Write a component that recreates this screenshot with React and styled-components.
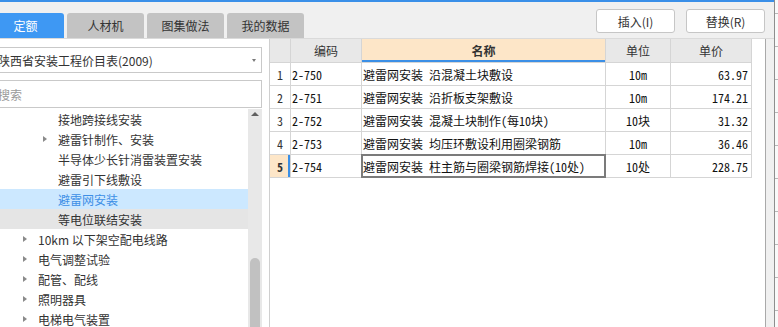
import React from 'react';
import styled, { createGlobalStyle } from 'styled-components';

const GlobalStyle = createGlobalStyle`
  html, body { margin: 0; padding: 0; background: #f9f9f9; overflow: hidden; }
  body { font-family: "Noto Sans CJK SC", "Noto Sans", sans-serif; font-size: 12px; color: #333; }
  * { box-sizing: border-box; }
`;

const Screen = styled.div`
  display: flex;
  width: 778px;
  height: 327px;
  overflow: hidden;
`;

const Window = styled.div`
  width: 775px;
  flex: none;
  display: flex;
  flex-direction: column;
  background: #f0f0f0;
  border-right: 1px solid #8e8e8e;
  overflow: hidden;
`;

const EdgeStrip = styled.div`
  flex: 1;
  background-color: #f9f9f9;
  background-image: repeating-linear-gradient(
    to bottom,
    transparent 0 13px,
    #b8b8b8 13px 14px,
    transparent 14px 33px
  );
`;

const TopStrip = styled.div`
  height: 2px;
  flex: none;
  background: #3a8fe8;
`;

const Header = styled.div`
  height: 36px;
  flex: none;
  display: flex;
  align-items: flex-start;
`;

const TabList = styled.div`
  display: flex;
  gap: 3px;
  margin-left: -13px;
  margin-top: 11px;
`;

const Tab = styled.div`
  width: 77px;
  height: 25px;
  border-radius: 3px 3px 0 0;
  background: ${p => (p.$active ? '#3e98f3' : '#c3c3c3')};
  color: ${p => (p.$active ? '#fff' : '#333')};
  display: flex;
  align-items: center;
  justify-content: center;
  font-size: 12px;
`;

const ButtonGroup = styled.div`
  margin-left: auto;
  margin-top: 7px;
  margin-right: 9px;
  display: flex;
  gap: 11px;
`;

const Button = styled.button`
  width: 79px;
  height: 24px;
  border: 1px solid #c6c6c6;
  border-radius: 3px;
  background: #fff;
  color: #333;
  font-family: "Noto Sans CJK SC", "Noto Sans", sans-serif;
  font-size: 12px;
  padding: 0;
  display: flex;
  align-items: center;
  justify-content: center;
`;

const Body = styled.div`
  flex: 1;
  min-height: 0;
  display: flex;
  border-top: 1px solid #dadada;
  padding-right: 8px;
`;

const LeftPanel = styled.div`
  margin-left: -13px;
  width: 283px;
  flex: none;
  background: #fff;
  border-right: 1px solid #cfcfcf;
  display: flex;
  flex-direction: column;
  padding: 8px 7px 0 8px;
`;

const Select = styled.div`
  height: 26px;
  flex: none;
  border: 1px solid #c9c9c9;
  display: flex;
  align-items: center;
  padding: 0 5px 0 2px;
  color: #333;
`;

const Caret = styled.span`
  margin-left: auto;
  width: 0;
  height: 0;
  border-top: 3px solid #7a7a7a;
  border-left: 2.5px solid transparent;
  border-right: 2.5px solid transparent;
`;

const Search = styled.div`
  height: 28px;
  flex: none;
  margin-top: 7px;
  border: 1px solid #c9c9c9;
  display: flex;
  align-items: center;
  padding: 0 2px;
  color: #9a9a9a;
`;

const Tree = styled.div`
  flex: 1;
  min-height: 0;
  margin-top: 1px;
  display: flex;
  overflow: hidden;
`;

const TreeList = styled.div`
  flex: 1;
  display: flex;
  flex-direction: column;
`;

const TreeRow = styled.div`
  height: 20px;
  flex: none;
  display: flex;
  align-items: center;
  padding-left: ${p => (p.$level === 2 ? 26 : 46)}px;
  background: ${p => (p.$state === 'selected' ? '#cce8ff' : p.$state === 'hover' ? '#e5e5e5' : 'transparent')};
  color: ${p => (p.$state === 'selected' ? '#3d8fe6' : '#333')};
  white-space: nowrap;
`;

const ArrowSlot = styled.span`
  width: 17px;
  flex: none;
  display: flex;
  align-items: center;
  padding-left: 2px;
`;

const Arrow = styled.span`
  width: 0;
  height: 0;
  border-left: 4px solid #8a8a8a;
  border-top: 3px solid transparent;
  border-bottom: 3px solid transparent;
`;

const ScrollBar = styled.div`
  width: 14px;
  flex: none;
  background: #e8e8e8;
  display: flex;
  flex-direction: column;
  align-items: center;
`;

const UpArrow = styled.span`
  margin-top: 3px;
  width: 0;
  height: 0;
  border-bottom: 4px solid #606060;
  border-left: 4px solid transparent;
  border-right: 4px solid transparent;
`;

const Thumb = styled.div`
  margin-top: 142px;
  width: 10px;
  height: 90px;
  flex: none;
  border-radius: 5px;
  background: #c1c1c1;
`;

const TablePanel = styled.div`
  flex: 1;
  min-width: 0;
  background: #fff;
  border-right: 1px solid #a9a9a9;
  overflow: hidden;
`;

const Grid = styled.div`
  display: grid;
  width: max-content;
  grid-template-columns: 20px 70px 243px 64px 80px;
  grid-template-rows: 23px repeat(5, 22px);
  gap: 1px;
  padding: 0 1px 1px 0;
  background: #d5d5d5;
`;

const HeadCell = styled.div`
  background: ${p => (p.$active ? '#fde6c8' : '#e8e8e8')};
  box-shadow: ${p => (p.$active ? 'inset 0 -2px 0 #3b8fe6' : 'none')};
  font-weight: ${p => (p.$active ? 700 : 400)};
  display: flex;
  align-items: center;
  justify-content: center;
  font-size: 12px;
  color: #333;
`;

const NumCell = styled.div`
  background: ${p => (p.$current ? '#fde6c8' : '#fff')};
  box-shadow: ${p => (p.$current ? 'inset -2px 0 0 #3b8fe6' : 'none')};
  font-weight: ${p => (p.$current ? 700 : 400)};
  font-family: "Noto Sans Mono CJK SC", "Liberation Mono", monospace;
  display: flex;
  align-items: center;
  justify-content: center;
  font-size: 12px;
`;

const justifyMap = { left: 'flex-start', center: 'center', right: 'flex-end' };

const Cell = styled.div`
  position: relative;
  background: #fff;
  display: flex;
  align-items: center;
  justify-content: ${p => justifyMap[p.$align || 'left']};
  padding: ${p => (p.$align === 'right' ? '0 3px 0 0' : p.$align === 'center' ? '0' : '0 0 0 1px')};
  font-family: "Noto Sans Mono CJK SC", "Noto Sans CJK SC", monospace;
  font-size: 12px;
  color: #111;
  white-space: nowrap;

  &::after {
    content: '';
    display: ${p => (p.$focused ? 'block' : 'none')};
    position: absolute;
    inset: -1px;
    border: 2px solid #7b7b7b;
    pointer-events: none;
  }
`;

const tabs = ['定额', '人材机', '图集做法', '我的数据'];

const tree = [
  { level: 3, text: '接地跨接线安装' },
  { level: 3, text: '避雷针制作、安装', arrow: true },
  { level: 3, text: '半导体少长针消雷装置安装' },
  { level: 3, text: '避雷引下线敷设' },
  { level: 3, text: '避雷网安装', state: 'selected' },
  { level: 3, text: '等电位联结安装', state: 'hover' },
  { level: 2, text: '10km 以下架空配电线路', arrow: true },
  { level: 2, text: '电气调整试验', arrow: true },
  { level: 2, text: '配管、配线', arrow: true },
  { level: 2, text: '照明器具', arrow: true },
  { level: 2, text: '电梯电气装置', arrow: true },
];

const rows = [
  ['2-750', '避雷网安装 沿混凝土块敷设', '10m', '63.97'],
  ['2-751', '避雷网安装 沿折板支架敷设', '10m', '174.21'],
  ['2-752', '避雷网安装 混凝土块制作(每10块)', '10块', '31.32'],
  ['2-753', '避雷网安装 均压环敷设利用圈梁钢筋', '10m', '36.46'],
  ['2-754', '避雷网安装 柱主筋与圈梁钢筋焊接(10处)', '10处', '228.75'],
];

export default function App() {
  return (
    <>
      <GlobalStyle />
      <Screen>
        <Window>
          <TopStrip />
          <Header>
            <TabList>
              {tabs.map((t, i) => (
                <Tab key={t} $active={i === 0}>{t}</Tab>
              ))}
            </TabList>
            <ButtonGroup>
              <Button>插入(I)</Button>
              <Button>替换(R)</Button>
            </ButtonGroup>
          </Header>
          <Body>
            <LeftPanel>
              <Select>
                <span>陕西省安装工程价目表(2009)</span>
                <Caret />
              </Select>
              <Search>搜索</Search>
              <Tree>
                <TreeList>
                  {tree.map(item => (
                    <TreeRow key={item.text} $level={item.level} $state={item.state}>
                      <ArrowSlot>{item.arrow && <Arrow />}</ArrowSlot>
                      {item.text}
                    </TreeRow>
                  ))}
                </TreeList>
                <ScrollBar>
                  <UpArrow />
                  <Thumb />
                </ScrollBar>
              </Tree>
            </LeftPanel>
            <TablePanel>
              <Grid>
                <HeadCell />
                <HeadCell>编码</HeadCell>
                <HeadCell $active>名称</HeadCell>
                <HeadCell>单位</HeadCell>
                <HeadCell>单价</HeadCell>
                {rows.map((r, i) => {
                  const current = i === rows.length - 1;
                  return (
                    <React.Fragment key={r[0]}>
                      <NumCell $current={current}>{i + 1}</NumCell>
                      <Cell>{r[0]}</Cell>
                      <Cell $focused={current}>{r[1]}</Cell>
                      <Cell $align="center">{r[2]}</Cell>
                      <Cell $align="right">{r[3]}</Cell>
                    </React.Fragment>
                  );
                })}
              </Grid>
            </TablePanel>
          </Body>
        </Window>
        <EdgeStrip />
      </Screen>
    </>
  );
}
